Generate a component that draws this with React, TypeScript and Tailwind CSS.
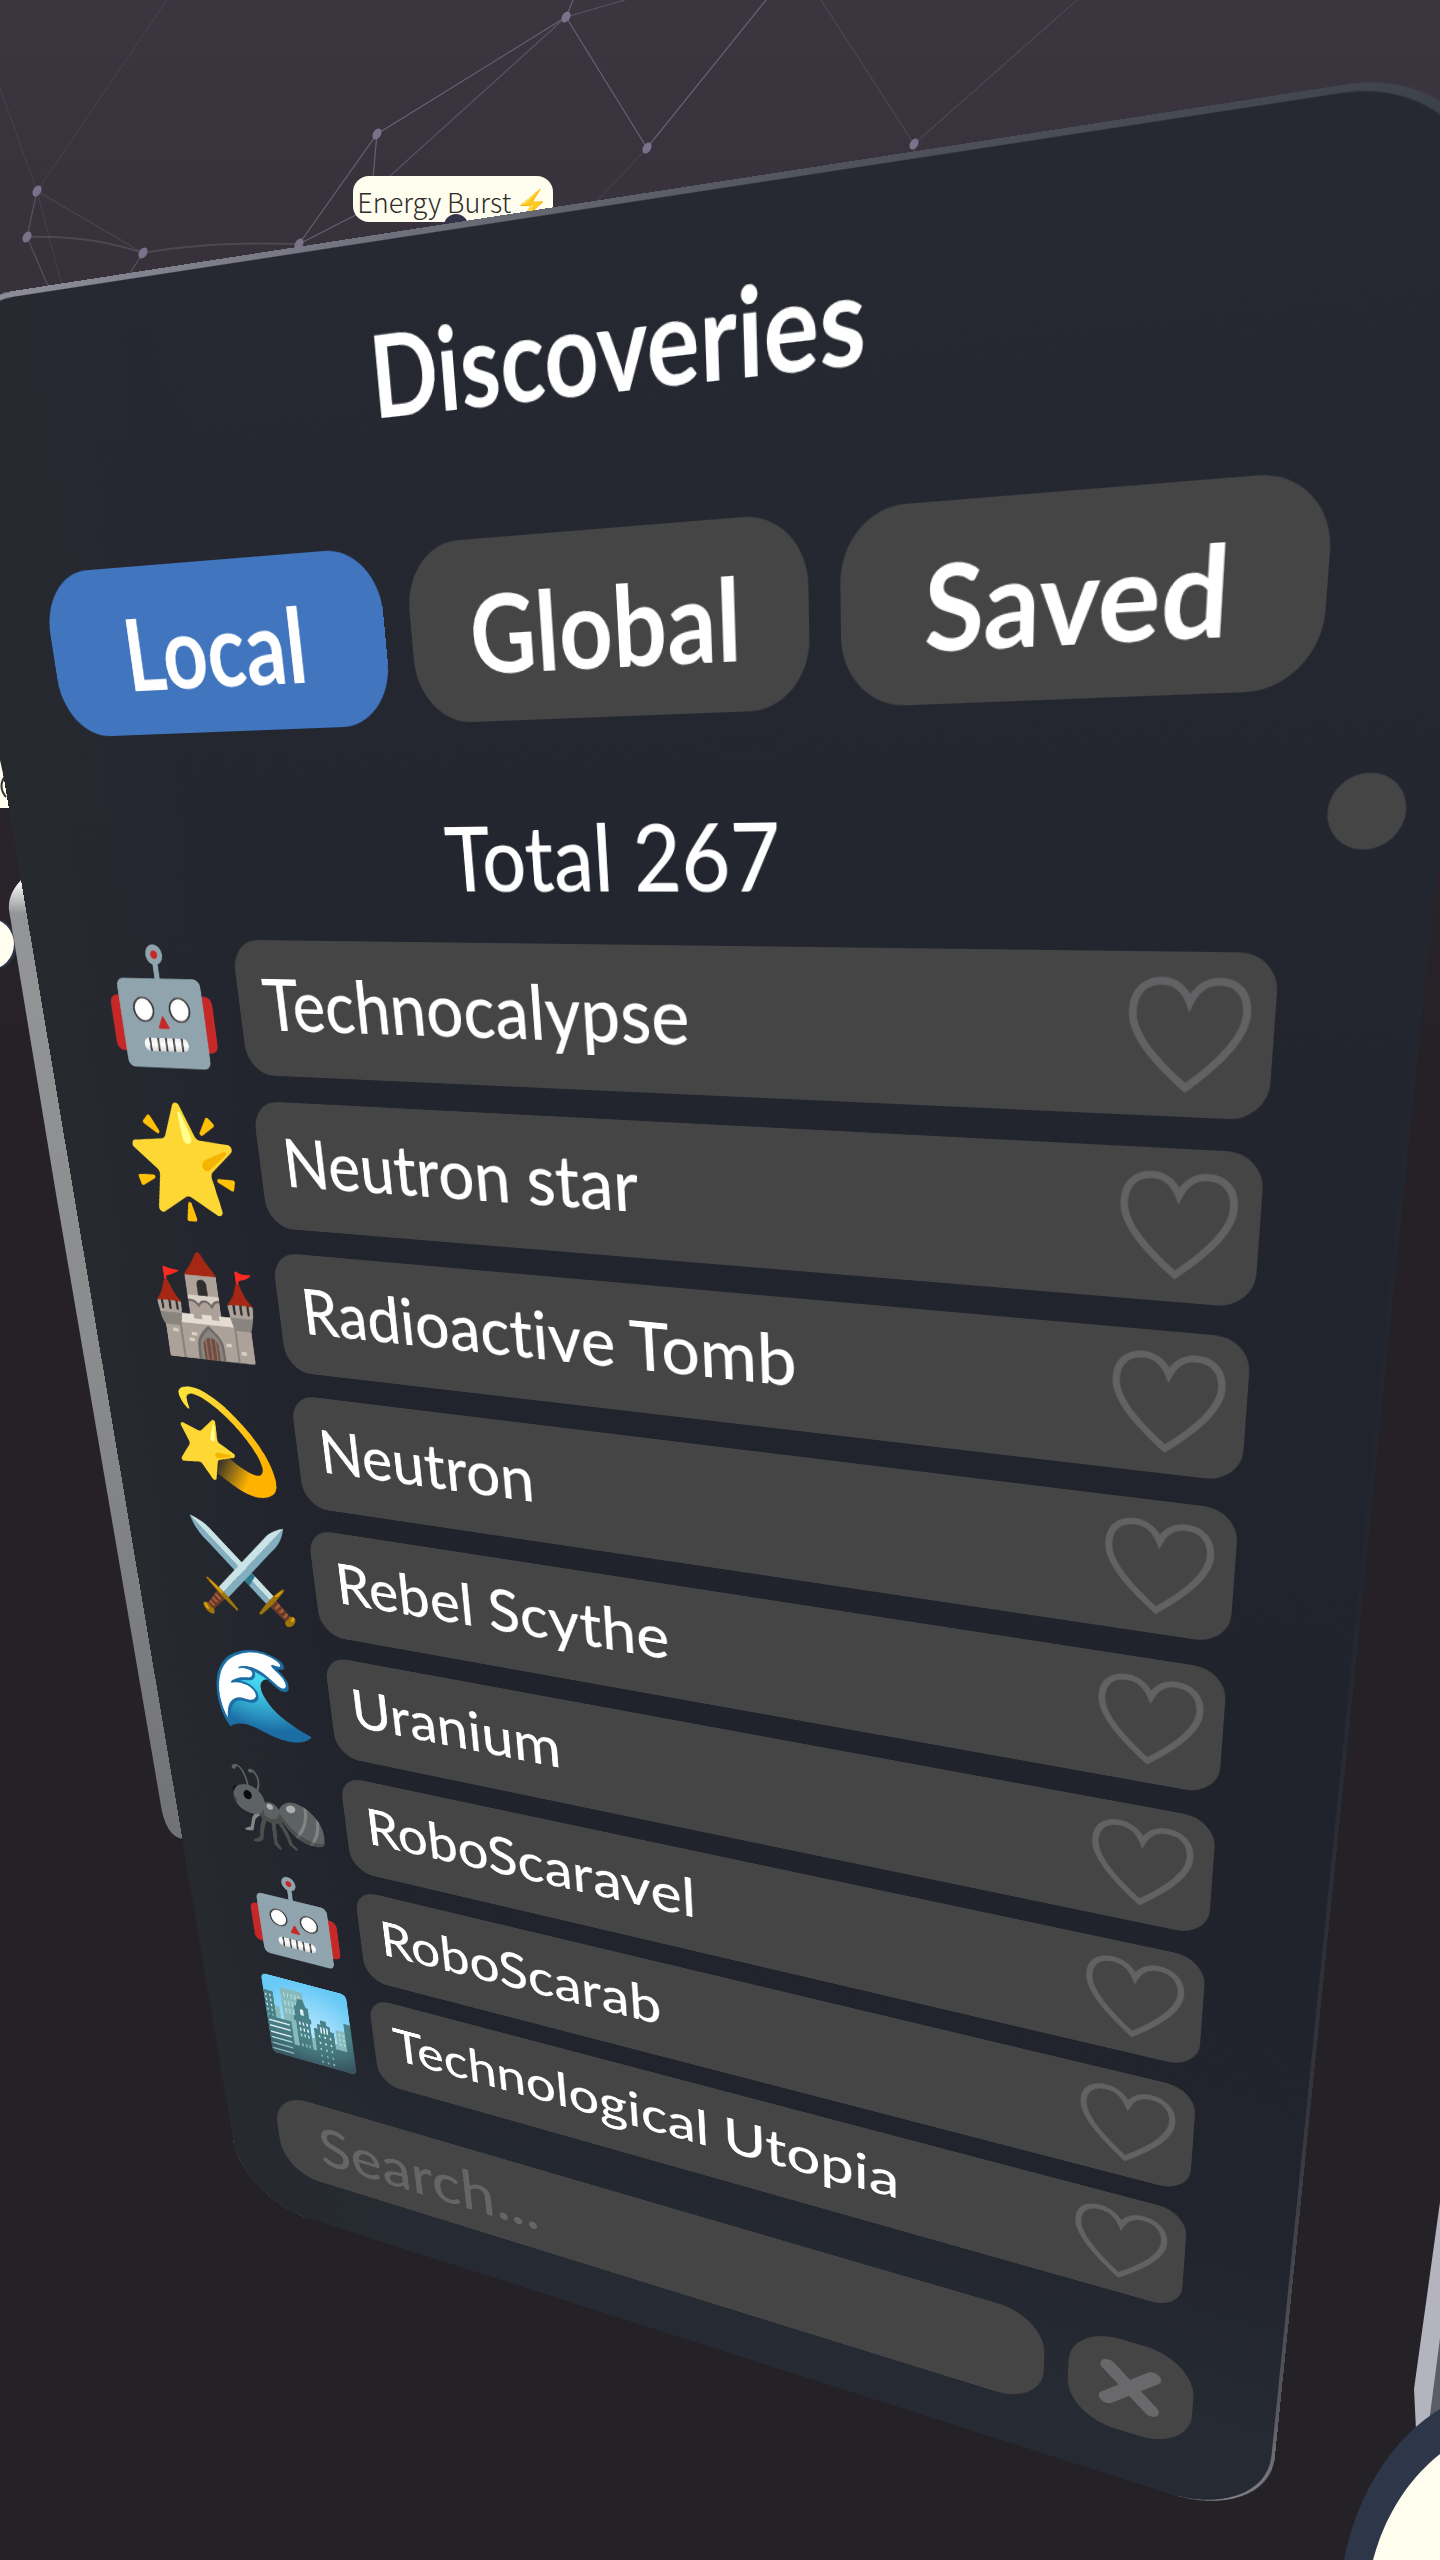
import React, { useState } from "react";

type Discovery = { emoji: string; name: string };

const tabs = ["Local", "Global", "Saved"];

const discoveries: Discovery[] = [
  { emoji: "🤖", name: "Technocalypse" },
  { emoji: "🌟", name: "Neutron star" },
  { emoji: "🏰", name: "Radioactive Tomb" },
  { emoji: "💫", name: "Neutron" },
  { emoji: "⚔️", name: "Rebel Scythe" },
  { emoji: "🌊", name: "Uranium" },
  { emoji: "🐜", name: "RoboScaravel" },
  { emoji: "🤖", name: "RoboScarab" },
  { emoji: "🏙️", name: "Technological Utopia" },
];

function HeartIcon() {
  return (
    <svg viewBox="0 0 108 106" className="h-[106px] w-[108px]" fill="none" stroke="#626264" strokeWidth="7" aria-hidden="true">
      <path d="M54 23C49 11 40 4 29 4C13 4 4 15 4 32C4 53 25 77 54 101C83 77 104 53 104 32C104 15 95 4 79 4C68 4 59 11 54 23Z" />
    </svg>
  );
}

function CrossIcon() {
  return (
    <svg viewBox="0 0 80 80" className="size-20" stroke="#69696b" strokeWidth="19" strokeLinecap="round" aria-hidden="true">
      <path d="M13 13L67 67M67 13L13 67" />
    </svg>
  );
}

const nodes = [
  [37, 191],
  [27, 237],
  [143, 253],
  [299, 244],
  [377, 134],
  [566, 17],
  [647, 148],
  [914, 144],
];

/* Constellation behind the panel, plus the edges of neighbouring world objects. */
function Backdrop() {
  return (
    <svg viewBox="0 0 1440 2560" preserveAspectRatio="xMinYMin slice" className="absolute inset-0 h-full w-full" aria-hidden="true">
      <defs>
        <linearGradient id="tube" x1="0" y1="880" x2="0" y2="1840" gradientUnits="userSpaceOnUse">
          <stop offset="0" stopColor="#ffffff" />
          <stop offset="0.035" stopColor="#949597" />
          <stop offset="0.5" stopColor="#8a8b8d" />
          <stop offset="1" stopColor="#717275" />
        </linearGradient>
      </defs>
      <g fill="none" stroke="#77727f" strokeWidth="1.2">
        <path d="M566 17L377 134L299 244L385 200M573 0L566 17L647 148L766 0M377 134L373 178" opacity="0.75" />
        <path d="M566 17L390 176M566 17L625 0M27 237L37 191M27 237L48 286M143 253L128 276" opacity="0.5" />
        <path d="M37 191L143 253" opacity="0.3" />
        <path d="M821 0L914 144L1077 0M914 144V156" opacity="0.3" />
        <path d="M27 237Q90 235 143 253Q210 241 299 244" strokeWidth="2" opacity="0.35" />
        <path d="M0 88L37 191L167 0M37 191L62 286M647 148L598 200" opacity="0.18" />
      </g>
      <g fill="#77738a">
        {nodes.map(([x, y]) => (
          <ellipse key={x} cx={x} cy={y} rx="4" ry="6" transform={"rotate(30 " + x + " " + y + ")"} />
        ))}
      </g>
      <path d="M0 760L20 850V808H0Z" fill="#fffdee" />
      <path d="M6 775Q-3 786 6 797" stroke="#333333" strokeWidth="2" fill="none" />
      <circle cx="-10" cy="944" r="27" fill="#2e364a" />
      <circle cx="-12" cy="944" r="26" fill="#fffdee" />
      <path d="M30 872Q7 890 9 910L57 1200L160 1800Q165 1838 184 1839L200 1830L60 1000Z" fill="url(#tube)" />
      <path d="M1440 2202L1414 2389L1416 2430H1440Z" fill="#b4b4be" />
      <path d="M1440 2338L1428 2430H1440Z" fill="#5b5c68" />
      <path d="M1440 2409C1392 2438 1356 2496 1344 2560H1440Z" fill="#2e364a" />
      <path d="M1440 2454C1407 2480 1384 2518 1373 2560H1440Z" fill="#fffdee" />
    </svg>
  );
}

export default function App() {
  const [active, setActive] = useState("Local");
  const [query, setQuery] = useState("");

  return (
    <main className="relative min-h-screen overflow-hidden bg-[linear-gradient(#3a353f_0%,#38323c_8%,#2a252c_30%,#252127_42%,#242127_100%)] font-['Lato','Noto_Color_Emoji',sans-serif] [font-variant-ligatures:none]">
      <Backdrop />

      <div className="absolute top-[176px] left-[353px] flex h-[46px] w-[200px] items-center justify-center gap-1 rounded-2xl bg-[#fffdee] pt-1 font-['Noto_Sans_CJK_SC','Noto_Color_Emoji',sans-serif] text-[27px] leading-none font-light whitespace-nowrap text-[#2c2c2c]">
        <span>Energy Burst</span>
        <span>⚡</span>
        <span className="absolute -bottom-4 left-[91px] size-6 rounded-full bg-[#33344a]" />
      </div>

      {/* The panel is a flat card standing in the 3D scene and seen at an angle. */}
      <section
        aria-label="Discoveries"
        className="absolute top-0 left-0 w-[1494px] origin-top-left [transform:matrix3d(0.762558,-0.176223,0,-0.000198229,0.171409,1.162372,0,0.000189986,0,0,1,0,-74.822,310.269,0,1)]"
      >
        <div className="absolute -top-[5px] -right-1 bottom-0 left-0 rounded-[116px] bg-[linear-gradient(to_right,#92939f_0%,#7c7d89_25%,#50535c_65%,#43474f_90%,transparent_97%),linear-gradient(#3d434c_0%,#22262f_15%,#22272f_50%,#34353d_75%,#55565d_92%,#8a8b92_100%)]" />
        <div className="relative flex flex-col rounded-[116px] bg-[linear-gradient(to_right,#262a2f_0%,transparent_22%),linear-gradient(#262832_0%,#22242e_30%,#20222c_60%,#21242d_82%,#262a32_95%)] pt-12 pb-[82px] text-white">
          <h1 className="pl-8 text-center text-[95px] leading-[120px] font-bold">Discoveries</h1>

          <div role="tablist" className="mt-[88px] grid grid-cols-3 gap-[30px] pr-[100px] pl-24">
            {tabs.map((tab) => (
              <button
                key={tab}
                role="tab"
                aria-selected={tab === active}
                onClick={() => setActive(tab)}
                className={
                  tab === active
                    ? "h-[165px] rounded-[60px] bg-[#4176bf] text-[98px] leading-none font-bold"
                    : "h-[165px] rounded-[60px] bg-[#454546] text-[98px] leading-none font-bold"
                }
              >
                {tab}
              </button>
            ))}
          </div>

          <div className="flex gap-[30px] pr-6 pl-24">
            <div className="flex grow flex-col">
              <p className="mt-20 text-center text-[88px] leading-[100px] font-medium">Total 267</p>
              <ul className="mt-9 flex flex-col gap-[30px]">
                {discoveries.map((item) => (
                  <li key={item.name} className="flex h-[150px] items-center gap-8">
                    <span className="flex h-full w-[150px] justify-center text-[128px] leading-[142px] whitespace-nowrap">{item.emoji}</span>
                    <div className="flex h-full grow items-center justify-between rounded-[34px] bg-[#454546] pr-5 pl-8">
                      <button className="grow pb-3 text-left text-[79px] leading-[100px] font-medium whitespace-nowrap">{item.name}</button>
                      <button aria-label={"Save " + item.name}>
                        <HeartIcon />
                      </button>
                    </div>
                  </li>
                ))}
              </ul>
            </div>
            <div className="pt-[67px]">
              <button aria-label="Scroll" className="size-[62px] rounded-full bg-[#454546]" />
            </div>
          </div>

          <div className="mt-[74px] flex gap-[30px] pr-[94px] pl-[88px]">
            <input
              type="text"
              aria-label="Search discoveries"
              placeholder="Search..."
              value={query}
              onChange={(event) => setQuery(event.target.value)}
              className="h-[150px] min-w-0 grow rounded-[60px] bg-[#454546] px-[70px] text-[98px] font-medium outline-none placeholder:text-[#656567]"
            />
            <button aria-label="Close" className="flex size-[150px] shrink-0 items-center justify-center rounded-[60px] bg-[#454546]">
              <CrossIcon />
            </button>
          </div>
        </div>
      </section>
    </main>
  );
}
